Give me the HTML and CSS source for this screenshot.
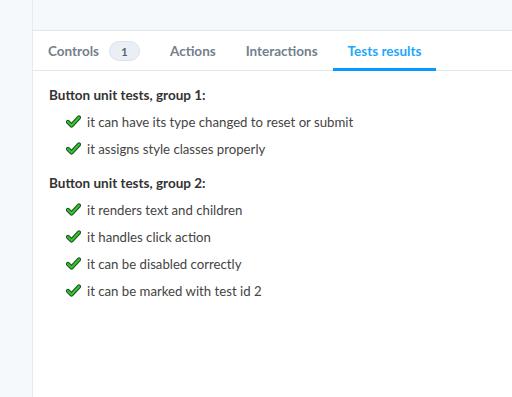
FILE: index.html
```html
<!DOCTYPE html>
<html>
<head>
<meta charset="utf-8">
<link rel="stylesheet" href="styles.css">
</head>
<body>
<div class="app">
  <aside class="sidebar"></aside>
  <main class="main">
    <div class="preview"></div>
    <nav class="tabs">
      <div class="tab">Controls <span class="badge">1</span></div>
      <div class="tab">Actions</div>
      <div class="tab">Interactions</div>
      <div class="tab active">Tests results</div>
    </nav>
    <section class="results">
      <div class="group">
        <h3 class="group-title">Button unit tests, group 1:</h3>
        <ul class="list">
          <li class="item"><svg class="check" viewBox="0 0 15 13"><path class="o" d="M2 7 L5.5 10.5 L13 2.5"/><path class="i" d="M2 7 L5.5 10.5 L13 2.5"/></svg>it can have its type changed to reset or submit</li>
          <li class="item"><svg class="check" viewBox="0 0 15 13"><path class="o" d="M2 7 L5.5 10.5 L13 2.5"/><path class="i" d="M2 7 L5.5 10.5 L13 2.5"/></svg>it assigns style classes properly</li>
        </ul>
      </div>
      <div class="group">
        <h3 class="group-title">Button unit tests, group 2:</h3>
        <ul class="list">
          <li class="item"><svg class="check" viewBox="0 0 15 13"><path class="o" d="M2 7 L5.5 10.5 L13 2.5"/><path class="i" d="M2 7 L5.5 10.5 L13 2.5"/></svg>it renders text and children</li>
          <li class="item"><svg class="check" viewBox="0 0 15 13"><path class="o" d="M2 7 L5.5 10.5 L13 2.5"/><path class="i" d="M2 7 L5.5 10.5 L13 2.5"/></svg>it handles click action</li>
          <li class="item"><svg class="check" viewBox="0 0 15 13"><path class="o" d="M2 7 L5.5 10.5 L13 2.5"/><path class="i" d="M2 7 L5.5 10.5 L13 2.5"/></svg>it can be disabled correctly</li>
          <li class="item"><svg class="check" viewBox="0 0 15 13"><path class="o" d="M2 7 L5.5 10.5 L13 2.5"/><path class="i" d="M2 7 L5.5 10.5 L13 2.5"/></svg>it can be marked with test id 2</li>
        </ul>
      </div>
    </section>
  </main>
</div>
</body>
</html>
```
FILE: styles.css
```css
html, body {
  margin: 0;
  padding: 0;
  background: #ffffff;
  font-family: Lato, "Noto Sans", sans-serif;
  color: #333333;
}
.app {
  display: flex;
  height: 397px;
}
.sidebar {
  width: 32px;
  background: #f6f9fc;
  border-right: 1px solid #e5eaef;
  flex: none;
}
.main {
  flex: 1;
  display: flex;
  flex-direction: column;
}
.preview {
  height: 30px;
  background: #f6f9fc;
  border-bottom: 1px solid #dfe5ea;
}
.tabs {
  display: flex;
  height: 39px;
  border-bottom: 1px solid #e2e7ec;
}
.tab {
  display: flex;
  align-items: center;
  padding: 0 15px;
  font-size: 13.5px;
  font-weight: 700;
  color: #73808c;
  border-bottom: 3px solid transparent;
  margin-bottom: -1px;
  padding-top: 3px;
}
.tab.active {
  color: #1ea7fd;
  border-bottom-color: #029cfd;
}
.badge {
  display: inline-flex;
  align-items: center;
  justify-content: center;
  margin-left: 10px;
  width: 31px;
  height: 20px;
  border-radius: 10px;
  background: #e9eff5;
  border: 1px solid #dbe3ea;
  box-sizing: border-box;
  font-size: 11px;
  font-weight: 700;
  color: #555f69;
}
.results {
  padding: 14px 16px 0 16px;
}
.group {
  margin-bottom: 11px;
}
.group-title {
  margin: 0;
  font-size: 13.5px;
  font-weight: 700;
  line-height: 20px;
  color: #333333;
}
.list {
  list-style: none;
  margin: 3px 0 0 0;
  padding: 0 0 0 17px;
}
.item {
  display: flex;
  align-items: center;
  height: 27px;
  font-size: 13.2px;
  color: #444444;
}
.check {
  width: 15px;
  height: 13px;
  margin-right: 6px;
  flex: none;
}
.check path {
  fill: none;
  stroke-linecap: round;
  stroke-linejoin: round;
}
.check .o {
  stroke: #1e4d1e;
  stroke-width: 4.2;
}
.check .i {
  stroke: #34c534;
  stroke-width: 2.2;
}
```
